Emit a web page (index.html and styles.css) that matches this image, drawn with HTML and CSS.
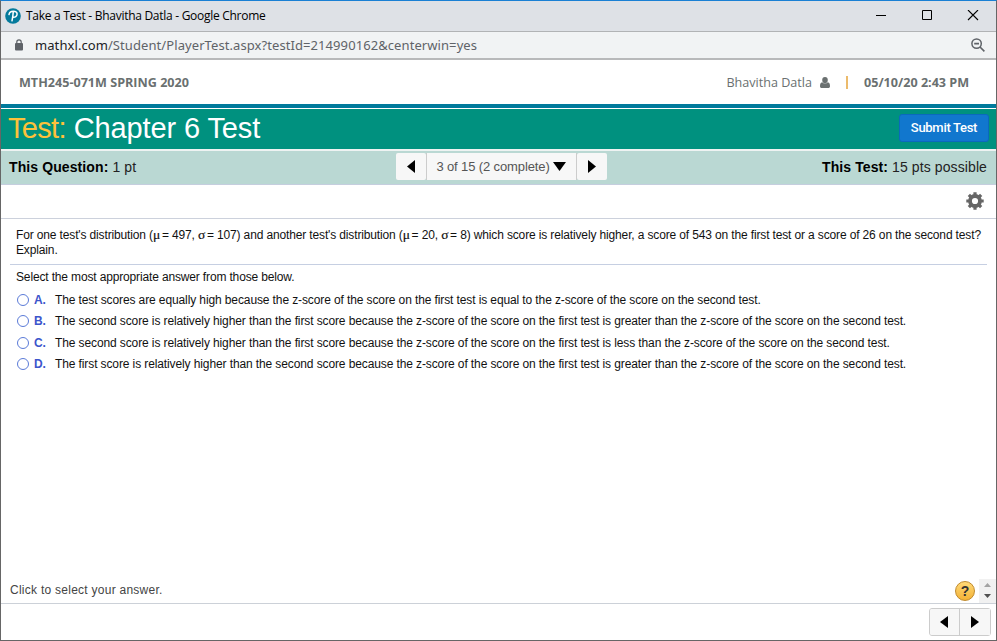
FILE: index.html
```html
<!DOCTYPE html>
<html lang="en">
<head>
    <meta charset="UTF-8">
    <meta name="viewport" content="width=device-width, initial-scale=1.0">
    <title>Take a Test - Bhavitha Datla</title>
    <link rel="stylesheet" href="styles.css">
</head>
<body>
    <div class="window">
        <div class="title-bar">
            <svg class="logo" width="16" height="16" viewBox="0 0 16 16">
                <circle cx="8" cy="8" r="7.8" fill="#047a9c"/>
                <path d="M4 6.600C4.300 4.300 6.200 3.200 8.300 3.200c2.300 0 3.800 1.100 3.800 2.900 0 2.200-2 3.400-4.400 3.100M8.200 4.400C8 7.500 7.600 10 7 12.800" fill="none" stroke="#fff" stroke-width="1.500" stroke-linecap="round"/>
            </svg>
            <span class="window-title">Take a Test - Bhavitha Datla - Google Chrome</span>
            <div class="window-controls">
                <svg width="12" height="12" viewBox="0 0 12 12"><path d="M1 5.500h10" stroke="#000"/></svg>
                <svg width="12" height="12" viewBox="0 0 12 12"><path d="M1.500 .5h9v9h-9z" fill="none" stroke="#000"/></svg>
                <svg width="12" height="12" viewBox="0 0 12 12"><path d="M1 0l10 10M11 0L1 10" stroke="#000" stroke-width="1.100"/></svg>
            </div>
        </div>

        <div class="address-bar">
            <svg class="lock" width="8" height="12" viewBox="0 0 8 12">
                <rect x="0" y="4" width="8" height="7.500" rx="1" fill="#5f6368"/>
                <path d="M1.800 4.500V3a2.200 2.200 0 0 1 4.400 0v1.500" fill="none" stroke="#5f6368" stroke-width="1.200"/>
            </svg>
            <span class="url"><span class="host">mathxl.com</span>/Student/PlayerTest.aspx?testId=214990162&amp;centerwin=yes</span>
            <svg class="zoom-out" width="14" height="14" viewBox="0 0 14 14">
                <circle cx="5.600" cy="5.600" r="4.700" fill="none" stroke="#5f6368" stroke-width="1.500"/>
                <path d="M3.200 5.600h4.800M9 9l4.400 4.400" stroke="#5f6368" stroke-width="1.600"/>
            </svg>
        </div>

        <header class="course-header">
            <span class="course">MTH245-071M SPRING 2020</span>
            <div class="account">
                <span class="user-name">Bhavitha Datla</span>
                <svg class="user-icon" width="10" height="11" viewBox="0 0 10 11">
                    <path d="M5 0a2.800 2.900 0 0 1 2.800 2.900C7.800 5 6.500 6.200 5 6.200S2.200 5 2.200 2.900A2.800 2.900 0 0 1 5 0zM2.200 5.300C3.700 7 6.300 7 7.800 5.300 9.500 5.600 10 7 10 9.200 10 10.300 9.300 11 8.300 11H1.700C.7 11 0 10.300 0 9.200 0 7 .5 5.600 2.200 5.300z" fill="#6a7070"/>
                </svg>
                <span class="divider"></span>
                <span class="date">05/10/20 2:43 PM</span>
            </div>
        </header>

        <div class="test-banner">
            <h1 class="test-title"><span>Test:</span> Chapter 6 Test</h1>
            <button class="btn-submit">Submit Test</button>
        </div>

        <div class="info-bar">
            <div class="info-left"><b>This Question:</b> 1 pt</div>
            <div class="question-nav">
                <button class="nav-btn"><svg width="8" height="13" viewBox="0 0 8 13"><path d="M8 0v13L0 6.500z"/></svg></button>
                <button class="nav-select"><span>3 of 15 (2 complete)</span><svg width="13" height="9" viewBox="0 0 13 9"><path d="M0 0h13L6.500 9z"/></svg></button>
                <button class="nav-btn"><svg width="8" height="13" viewBox="0 0 8 13"><path d="M0 0v13l8-6.500z"/></svg></button>
            </div>
            <div class="info-right"><b>This Test:</b> 15 pts possible</div>
        </div>

        <div class="toolbar">
            <svg width="18" height="18" viewBox="0 0 18 18">
                <circle cx="9" cy="9" r="5" fill="none" stroke="#666" stroke-width="3.800"/>
                <path d="M9 .3v3M9 14.700v3M.3 9h3M14.700 9h3M2.850 2.850l2.100 2.100M13.050 13.050l2.100 2.100M2.850 15.150l2.100-2.100M13.050 4.950l2.100-2.100" stroke="#666" stroke-width="3.200"/>
            </svg>
        </div>

        <main class="content">
            <p class="question">For one test's distribution (<i>μ</i> = 497, <i>σ</i> = 107) and another test's distribution (<i>μ</i> = 20, <i>σ</i> = 8) which score is relatively higher, a score of 543 on the first test or a score of 26 on the second test?<br>Explain.</p>
            <p class="prompt">Select the most appropriate answer from those below.</p>
            <div class="answers">
                <label class="answer"><input type="radio" name="answer"><b>A.</b><span>The test scores are equally high because the z-score of the score on the first test is equal to the z-score of the score on the second test.</span></label>
                <label class="answer"><input type="radio" name="answer"><b>B.</b><span>The second score is relatively higher than the first score because the z-score of the score on the first test is greater than the z-score of the score on the second test.</span></label>
                <label class="answer"><input type="radio" name="answer"><b>C.</b><span>The second score is relatively higher than the first score because the z-score of the score on the first test is less than the z-score of the score on the second test.</span></label>
                <label class="answer"><input type="radio" name="answer"><b>D.</b><span>The first score is relatively higher than the second score because the z-score of the score on the first test is greater than the z-score of the score on the second test.</span></label>
            </div>
        </main>

        <div class="hint-bar">
            <span class="hint">Click to select your answer.</span>
            <button class="help">?</button>
            <div class="spinner">
                <svg width="7" height="4" viewBox="0 0 7 4"><path d="M0 4h7L3.500 0z" fill="#a3a3a3"/></svg>
                <svg width="7" height="4" viewBox="0 0 7 4"><path d="M0 0h7L3.500 4z" fill="#505050"/></svg>
            </div>
        </div>

        <footer class="footer">
            <div class="footer-nav">
                <button class="nav-btn"><svg width="8" height="12" viewBox="0 0 8 12"><path d="M8 0v12L0 6z"/></svg></button>
                <button class="nav-btn"><svg width="8" height="12" viewBox="0 0 8 12"><path d="M0 0v12l8-6z"/></svg></button>
            </div>
        </footer>
    </div>
</body>
</html>
```
FILE: styles.css
```css
* {
    margin: 0;
    padding: 0;
    box-sizing: border-box;
}

body {
    font-family: 'Liberation Sans', Arial, sans-serif;
    background: #fff;
    overflow: hidden;
}

button {
    font-family: inherit;
    cursor: pointer;
}

svg {
    display: block;
    flex-shrink: 0;
}

.window {
    display: flex;
    flex-direction: column;
    width: 100vw;
    height: 100vh;
    border: 1px solid #666;
    border-top-color: #1a80d4;
}

/* Browser frame */
.title-bar {
    display: flex;
    align-items: center;
    height: 31px;
    padding: 0 17px 1px 4px;
    background: #dee1e6;
    border-bottom: 1px solid #b1b3b5;
}

.window-title {
    margin-left: 5px;
    font-family: 'Open Sans', sans-serif;
    font-size: 12px;
    letter-spacing: -0.28px;
    color: #000;
    white-space: nowrap;
}

.window-controls {
    display: flex;
    gap: 34px;
    margin-left: auto;
}

.address-bar {
    display: flex;
    align-items: center;
    height: 28px;
    padding: 0 11px 0 14px;
    background: #f1f3f4;
    border-bottom: 2px solid #b8b9ba;
}

.url {
    margin-left: 12px;
    font-family: 'Noto Sans', sans-serif;
    font-size: 13px;
    letter-spacing: 0.08px;
    color: #5f6368;
    white-space: nowrap;
}

.host {
    color: #202124;
}

.zoom-out {
    margin-left: auto;
}

/* Course header */
.course-header {
    display: flex;
    align-items: center;
    justify-content: space-between;
    height: 44px;
    padding: 0 27px 0 18px;
    font-family: 'Open Sans', sans-serif;
    font-size: 12.6px;
    color: #6a7070;
    white-space: nowrap;
}

.course,
.date {
    font-weight: bold;
}

.account {
    display: flex;
    align-items: center;
}

.user-icon {
    margin-left: 8px;
}

.divider {
    width: 2px;
    height: 13px;
    margin: 0 16px;
    background: #ecbb6c;
}

.date {
    width: 105px;
}

/* Test banner */
.test-banner {
    display: flex;
    align-items: center;
    justify-content: space-between;
    height: 47px;
    padding: 0 7px;
    background: #00917f;
    border-top: 4px solid #007a9c;
    border-bottom: 2px solid #eef3f2;
    box-shadow: inset 0 1px #fff;
}

.test-title {
    padding-bottom: 1px;
    font-size: 29px;
    font-weight: normal;
    letter-spacing: -0.12px;
    color: #fff;
    white-space: nowrap;
}

.test-title span {
    letter-spacing: -0.7px;
    color: #fdc13a;
}

.btn-submit {
    width: 90px;
    height: 28px;
    margin-bottom: 2px;
    font-family: Roboto, sans-serif;
    font-size: 13px;
    font-weight: 500;
    letter-spacing: -0.3px;
    color: #fff;
    background: #1177ce;
    border: 1px solid #0b69bd;
    border-radius: 3px;
}

/* Info bar */
.info-bar {
    display: grid;
    grid-template-columns: 1fr auto 1fr;
    align-items: center;
    height: 34px;
    padding: 0 9px 2px 8px;
    font-size: 14px;
    letter-spacing: 0.1px;
    color: #222;
    background: #bad8d3;
    border-bottom: 1px solid #c5cede;
    white-space: nowrap;
}

.info-bar b {
    color: #000;
}

.info-right {
    text-align: right;
}

.question-nav {
    display: flex;
    height: 27px;
    margin-right: -6px;
}

.nav-btn,
.nav-select {
    display: flex;
    align-items: center;
    justify-content: center;
    background: #f7f7f7;
    border: none;
}

.nav-btn {
    width: 30px;
    border-radius: 2px;
}

.nav-select {
    width: 151px;
    gap: 3px;
    font-size: 13px;
    letter-spacing: -0.12px;
    color: #555;
    border-left: 1px solid #ccc;
    border-right: 1px solid #ccc;
    white-space: nowrap;
}

/* Toolbar */
.toolbar {
    display: flex;
    align-items: center;
    justify-content: flex-end;
    height: 34px;
    padding: 0 12px 2px;
    border-bottom: 1px solid #ccd1dc;
}

/* Question */
.content {
    flex: 1;
    padding: 9px 9px 0;
    font-size: 12px;
    letter-spacing: -0.11px;
    color: #111;
    white-space: nowrap;
}

.question {
    height: 37px;
    padding-left: 6px;
    line-height: 15px;
    letter-spacing: -0.14px;
    border-bottom: 1px solid #c6cfe2;
}

.question i {
    margin-right: -1.4px;
    font-family: 'Liberation Serif', serif;
    font-style: normal;
    font-size: 13.5px;
    line-height: 1;
    -webkit-text-stroke: 0.2px #111;
}

.prompt {
    padding: 5px 6px 0;
    line-height: 15px;
    letter-spacing: -0.15px;
}

.answers {
    padding: 4px 0 0 7px;
}

.answer {
    display: flex;
    align-items: center;
    height: 21.5px;
}

.answer input {
    appearance: none;
    flex-shrink: 0;
    width: 12px;
    height: 12px;
    margin-right: 5px;
    border: 1px solid #5b7bd8;
    border-radius: 50%;
}

.answer b {
    width: 21px;
    color: #3c55cc;
}

/* Bottom area */
.hint-bar {
    display: flex;
    align-items: center;
    height: 26px;
    padding-left: 9px;
    border-bottom: 1px solid #ccd1d8;
}

.hint {
    padding-bottom: 2px;
    font-size: 12px;
    letter-spacing: 0.26px;
    color: #444;
}

.help {
    width: 20px;
    height: 20px;
    margin-left: auto;
    font-size: 14px;
    font-weight: bold;
    line-height: 18px;
    color: #333;
    background: linear-gradient(#ffd978, #f3b236);
    border: 1px solid #c08a2c;
    border-radius: 50%;
}

.spinner {
    display: flex;
    flex-direction: column;
    align-items: center;
    justify-content: center;
    gap: 7px;
    width: 17px;
    height: 24px;
    margin-left: 4px;
    background: #f1f1f1;
}

.footer {
    display: flex;
    align-items: center;
    justify-content: flex-end;
    height: 36px;
    padding-right: 5px;
}

.footer-nav {
    display: flex;
    width: 62px;
    height: 28px;
    border: 1px solid #ccc;
    border-radius: 3px;
    background: #f7f7f7;
}

.footer-nav .nav-btn {
    width: 29px;
    padding-right: 1px;
}

.footer-nav .nav-btn + .nav-btn {
    width: 31px;
    border-left: 1px solid #ccc;
    border-radius: 0;
}
```
